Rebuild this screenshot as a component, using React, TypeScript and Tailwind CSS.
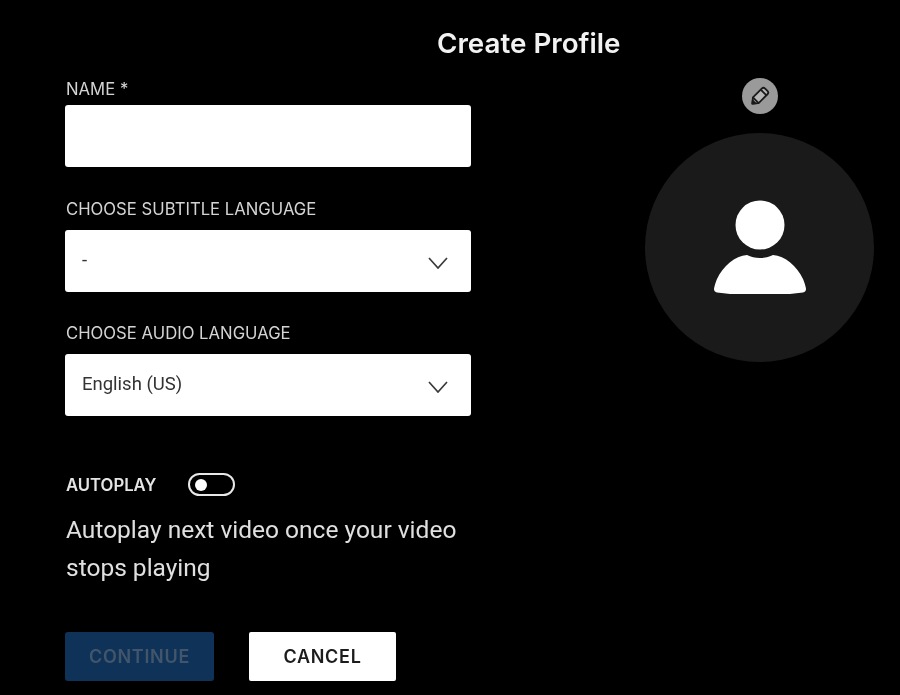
const labelClass = "block pl-[1px] font-['Inter',sans-serif] text-[16.700px] leading-[20px] text-[#d4d4d4]";
const fieldClass = "w-full h-[62px] bg-white rounded-[3px] flex items-center justify-between pl-[17px] pr-[23px] text-[18.500px] text-[#333333]";

const Chevron = () => (
  <svg viewBox="0 0 20 12" className="w-[20px] h-[12px] mt-[3px]" fill="none" stroke="#3a3a3a" strokeWidth={1.7}>
    <path d="M1 1l9 10 9-10" />
  </svg>
);

const SelectField = ({ label, value, labelGap }: { label: string; value: string; labelGap: string }) => (
  <div className={labelGap}>
    <span className={labelClass}>{label}</span>
    <div className={`${fieldClass} mt-[11px]`}>
      <span>{value}</span>
      <Chevron />
    </div>
  </div>
);

const App = () => {
  return (
    <div className="w-[900px] h-[695px] bg-black overflow-hidden text-white font-['Roboto',sans-serif] blur-[0.5px]">
      <h1 className="pl-[437px] pt-[26px] font-['Inter',sans-serif] text-[27.750px] leading-[34px] font-semibold text-[#f2f2f2]">Create Profile</h1>

      <div className="flex">
        <div className="w-[406px] ml-[65px] pt-[19px]">
          <span className={labelClass}>NAME *</span>
          <div className={`${fieldClass} mt-[6px]`} />

          <SelectField label="CHOOSE SUBTITLE LANGUAGE" value="-" labelGap="mt-[32px]" />
          <SelectField label="CHOOSE AUDIO LANGUAGE" value="English (US)" labelGap="mt-[31px]" />

          <div className="flex items-center mt-[57px]">
            <span className="w-[123px] pl-[1px] font-['Inter',sans-serif] text-[16.700px] leading-[20px] font-semibold text-[#e5e5e5]">AUTOPLAY</span>
            <div className="w-[47px] h-[23px] rounded-full border-2 border-[#e8e8e8] flex items-center pl-[5px]">
              <div className="w-[12px] h-[12px] rounded-full bg-white" />
            </div>
          </div>

          <p className="mt-[15px] pl-[1px] w-[400px] text-[24.500px] leading-[37.5px] text-[#e0e0e0]">
            Autoplay next video once your video stops playing
          </p>

          <div className="flex gap-[35px] mt-[46px]">
            <button className="w-[149px] h-[49px] rounded-[3px] bg-[#0f3358] font-['Inter',sans-serif] text-[18px] tracking-[0.7px] font-semibold text-[#43556a]">
              CONTINUE
            </button>
            <button className="w-[147px] h-[49px] rounded-[2px] bg-white font-['Inter',sans-serif] text-[18px] tracking-[0.7px] font-semibold text-[#1c1c1c]">
              CANCEL
            </button>
          </div>
        </div>

        <div className="ml-[174px] w-[229px] flex flex-col items-center pt-[18px]">
          <div className="w-[36px] h-[36px] rounded-full bg-[#9a9a9a] flex items-center justify-center">
            <svg viewBox="0 0 24 24" className="w-[23px] h-[23px]" fill="none" stroke="#1a1a1a" strokeWidth={1.9} strokeLinejoin="round">
              <g transform="rotate(-45 12 12)">
                <path d="M1.500 12l5-4.200h13a2.500 2.500 0 0 1 2.500 2.500v3.400a2.500 2.500 0 0 1-2.500 2.500h-13z" fill="#b5b5b5" />
                <path d="M6.500 7.800v8.400M18 7.800v8.400" />
                <path d="M1.500 12l2.500-2v4z" fill="#1a1a1a" />
              </g>
            </svg>
          </div>
          <div className="w-[229px] h-[229px] mt-[19px] rounded-full bg-[#1a1a1a] flex items-center justify-center">
            <svg viewBox="0 0 94 94" className="w-[94px] h-[94px] mb-[2px]" fill="#ffffff">
              <circle cx="47" cy="25" r="24.5" />
              <path d="M1 89c0-1 1-5 3-10 6-13 18-23 30-24 4 2 8 3 13 3s9-1 13-3c12 1 24 11 30 24 2 5 3 9 3 10 0 2-1 3-3 3.500-14 2-26 2.500-43 2.500S18 94.500 4 92.500c-2-.5-3-1.500-3-3.500z" />
            </svg>
          </div>
        </div>
      </div>
    </div>
  );
};

export default App;
